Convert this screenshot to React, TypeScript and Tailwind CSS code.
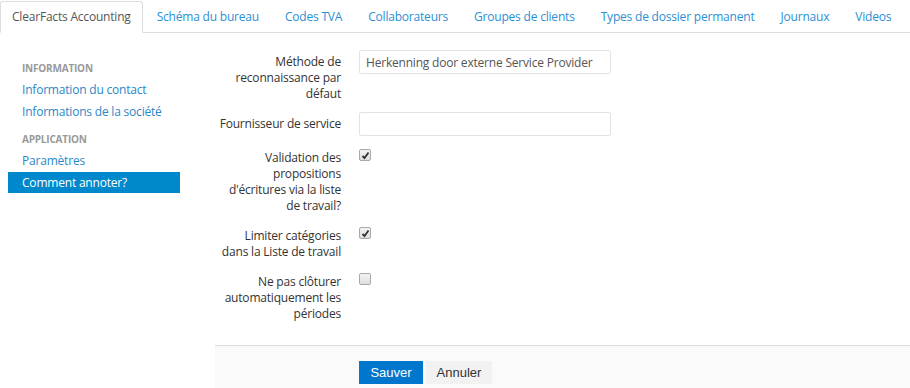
import React from "react";

const tabs = [
  "Schéma du bureau",
  "Codes TVA",
  "Collaborateurs",
  "Groupes de clients",
  "Types de dossier permanent",
  "Journaux",
  "Videos",
];

interface RowProps {
  lines: string[];
  children: React.ReactNode;
}

function Row({ lines, children }: RowProps) {
  return (
    <div className="flex">
      <div className="w-[126px] shrink-0 pt-[4px] text-right leading-[16px] text-[#333]">
        {lines.map((l) => (
          <div key={l} className="whitespace-nowrap">{l}</div>
        ))}
      </div>
      <div className="ml-[18px]">{children}</div>
    </div>
  );
}

function Check({ checked }: { checked: boolean }) {
  return (
    <div className="mt-[3px] flex h-[12px] w-[12px] items-center justify-center rounded-[2px] border border-[#a9a9a9] bg-gradient-to-b from-[#f4f4f4] to-[#dedede]">
      {checked && (
        <svg width="9" height="9" viewBox="0 0 9 9">
          <path d="M1.5 5 L3.5 7 L7.5 1.5" fill="none" stroke="#333" strokeWidth="1.8" />
        </svg>
      )}
    </div>
  );
}

export default function App() {
  return (
    <div className="h-[388px] w-[910px] overflow-hidden whitespace-nowrap bg-white text-[12px] tracking-[-0.2px]" style={{ fontFamily: '"Open Sans", sans-serif' }}>
      {/* tabs */}
      <div className="flex h-[33px] items-end border-b border-[#ddd] pt-[2px]">
        <div className="-mb-px flex h-[32px] items-center rounded-t-[3px] border border-[#ddd] border-b-white bg-white px-[11px] text-[#555]">
          ClearFacts Accounting
        </div>
        {tabs.map((t) => (
          <div key={t} className="ml-[2px] flex h-[31px] items-center px-3 text-[#2b8fd5]">
            {t}
          </div>
        ))}
      </div>

      <div className="flex">
        {/* sidebar */}
        <div className="w-[215px] shrink-0 pl-2 pt-[24px]">
          <div className="w-[172px]">
            <div className="flex h-[22px] items-center px-[14px] text-[10px] font-bold text-[#999]">INFORMATION</div>
            <div className="flex h-[22px] items-center px-[14px] text-[#2a87c8]">Information du contact</div>
            <div className="flex h-[22px] items-center px-[14px] text-[#2a87c8]">Informations de la société</div>
            <div className="mt-[5px] flex h-[22px] items-center px-[14px] text-[10px] font-bold text-[#999]">APPLICATION</div>
            <div className="flex h-[22px] items-center px-[14px] text-[#2a87c8]">Paramètres</div>
            <div className="flex h-[21px] items-center bg-[#0088cc] px-[14px] text-white">Comment annoter?</div>
          </div>
        </div>

        {/* main */}
        <div className="flex-1 pt-[17px]">
          <div className="flex flex-col gap-[10px]">
            <Row lines={["Méthode de", "reconnaissance par", "défaut"]}>
              <input
                readOnly
                value="Herkenning door externe Service Provider"
                className="h-[24px] w-[252px] rounded-[2px] border border-[#e3e3e3] px-[6px] text-[12px] tracking-[-0.2px] text-[#555] outline-none"
              />
            </Row>
            <Row lines={["Fournisseur de service"]}>
              <input readOnly className="h-[24px] w-[252px] rounded-[2px] border border-[#e3e3e3] px-[6px] outline-none" />
            </Row>
            <Row lines={["Validation des", "propositions", "d'écritures via la liste", "de travail?"]}>
              <Check checked />
            </Row>
            <Row lines={["Limiter catégories", "dans la Liste de travail"]}>
              <Check checked />
            </Row>
            <Row lines={["Ne pas clôturer", "automatiquement les", "périodes"]}>
              <Check checked={false} />
            </Row>
          </div>

          <div className="mt-[23px] h-[60px] border-t border-[#ddd] bg-[#fafafa] pl-[144px] pt-[15px]">
            <div className="flex gap-[3px] tracking-normal" style={{ fontFamily: '"Liberation Sans", Arial, sans-serif' }}>
              <button className="h-[23px] w-[64px] bg-[#0077cc] text-[13px] text-white">Sauver</button>
              <button className="h-[23px] w-[66px] bg-[#f2f2f2] text-[13px] text-[#333]">Annuler</button>
            </div>
          </div>
        </div>
      </div>
    </div>
  );
}
